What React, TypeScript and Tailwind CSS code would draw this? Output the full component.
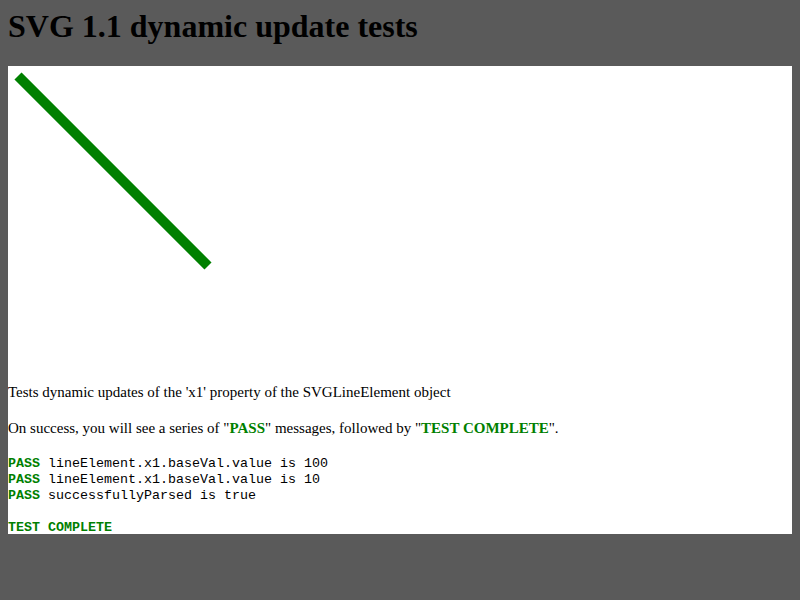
export default function App() {
  const serif = { fontFamily: '"Liberation Serif", "Times New Roman", serif' };
  const mono = { fontFamily: '"Liberation Mono", "Courier New", monospace' };

  return (
    <div className="min-h-screen bg-[#5a5a5a] p-2 text-black" style={serif}>
      <h1 className="mb-[21px] text-[32px] font-bold leading-[37px]">SVG 1.1 dynamic update tests</h1>
      <div className="h-[468px] overflow-hidden bg-white">
        <svg className="block" width="400" height="300">
          <line x1="10" y1="10" x2="200" y2="200" stroke="#008000" strokeWidth="10" />
        </svg>
        <p className="mt-[17px] text-[15px] leading-[19px]">
          Tests dynamic updates of the 'x1' property of the SVGLineElement object
        </p>
        <p className="mt-[17px] text-[15px] leading-[19px]">
          On success, you will see a series of "<span className="font-bold text-[#008000]">PASS</span>" messages,
          followed by "<span className="font-bold text-[#008000]">TEST COMPLETE</span>".
        </p>
        <div className="mt-[18px] whitespace-pre text-[13.33px] leading-[16px]" style={mono}>
          <div>
            <span className="font-bold text-[#008000]">PASS</span> lineElement.x1.baseVal.value is 100
          </div>
          <div>
            <span className="font-bold text-[#008000]">PASS</span> lineElement.x1.baseVal.value is 10
          </div>
          <div>
            <span className="font-bold text-[#008000]">PASS</span> successfullyParsed is true
          </div>
          <div>{" "}</div>
          <div className="font-bold text-[#008000]">TEST COMPLETE</div>
        </div>
      </div>
    </div>
  );
}
